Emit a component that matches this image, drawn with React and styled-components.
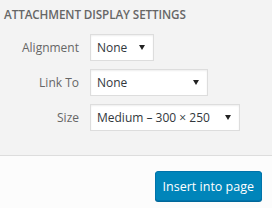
import React from 'react';
import styled, { createGlobalStyle } from 'styled-components';

const GlobalStyle = createGlobalStyle`
  html, body {
    margin: 0;
    padding: 0;
    background: #fcfcfc;
    font-family: "Open Sans", "Noto Sans", sans-serif;
  }
`;

const Frame = styled.div`
  width: 272px;
  height: 208px;
  display: flex;
  flex-direction: column;
  overflow: hidden;
`;

const Settings = styled.div`
  background: #f3f3f3;
  border-bottom: 1px solid #dddddd;
  height: 156px;
  box-sizing: border-box;
  padding: 6px 0 0 4px;
`;

const Title = styled.h2`
  margin: 0 0 12px;
  font-size: 11.7px;
  font-weight: 600;
  color: #666666;
  text-transform: uppercase;
  line-height: 16px;
  letter-spacing: -0.1px;
`;

const Row = styled.div`
  display: flex;
  align-items: center;
  margin-bottom: 8px;
`;

const Label = styled.span`
  width: 75px;
  text-align: right;
  padding-right: 11px;
  font-size: 12px;
  color: #666666;
`;

const Select = styled.div`
  width: ${({ w }) => w}px;
  height: 27px;
  box-sizing: border-box;
  background: #ffffff;
  border: 1px solid #dddddd;
  box-shadow: inset 0 1px 2px rgba(0, 0, 0, 0.07);
  display: flex;
  align-items: center;
  justify-content: space-between;
  padding: 0 8px 0 6px;
  font-size: 12px;
  color: #32373c;
`;

const Arrow = () => (
  <svg width="6" height="5" viewBox="0 0 6 5">
    <path d="M0 0 H6 L3 5 Z" fill="#222" />
  </svg>
);

const Footer = styled.div`
  flex: 1;
  display: flex;
  justify-content: flex-end;
  align-items: flex-start;
  padding: 15px 10px 0 0;
`;

const Button = styled.button`
  height: 30px;
  padding: 0 7px;
  background: #0085ba;
  border: 1px solid #0073aa;
  border-radius: 3px;
  box-shadow: 0 1px 0 #006799;
  color: #ffffff;
  font-family: "Open Sans", "Noto Sans", sans-serif;
  font-size: 12.5px;
  cursor: pointer;
`;

const fields = [
  { label: 'Alignment', value: 'None', w: 64 },
  { label: 'Link To', value: 'None', w: 118 },
  { label: 'Size', value: 'Medium – 300 × 250', w: 150 },
];

export default function App() {
  return (
    <Frame>
      <GlobalStyle />
      <Settings>
        <Title>Attachment Display Settings</Title>
        {fields.map((f) => (
          <Row key={f.label}>
            <Label>{f.label}</Label>
            <Select w={f.w}>
              <span>{f.value}</span>
              <Arrow />
            </Select>
          </Row>
        ))}
      </Settings>
      <Footer>
        <Button>Insert into page</Button>
      </Footer>
    </Frame>
  );
}
